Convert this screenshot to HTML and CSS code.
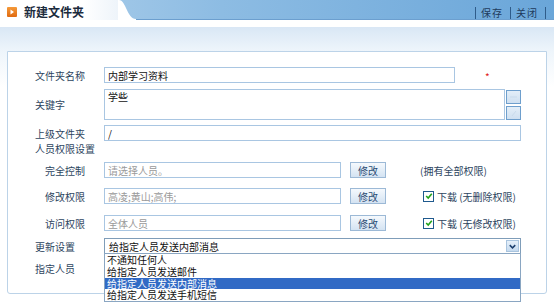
FILE: index.html
```html
<!DOCTYPE html>
<html lang="zh-CN">
<head>
    <meta charset="UTF-8">
    <meta name="viewport" content="width=device-width, initial-scale=1.0">
    <title>新建文件夹</title>
    <link rel="stylesheet" href="styles.css">
</head>
<body>

<div class="topbar">
    <div class="tab">
        <span class="tab-icon">
            <svg width="10" height="10" viewBox="0 0 10 10"><path d="M3.5 2.5 L7 5 L3.5 7.5 Z" fill="#fff"/></svg>
        </span>
        新建文件夹
    </div>
    <svg class="tab-curve" width="20" height="20" viewBox="0 0 20 20">
        <path d="M0 0 L1 0 C8 0, 9 19, 18 19 L18 20 L0 20 Z" fill="#fff"/>
    </svg>
    <div class="actions">
        <span class="action">保存</span>
        <span class="action">关闭</span>
    </div>
</div>
<div class="band"></div>

<div class="main">
    <div class="panel">
        <div class="row">
            <span class="label">文件夹名称</span>
            <input class="field field-name" type="text" value="内部学习资料">
            <span class="required">*</span>
        </div>
        <div class="row row-keys">
            <span class="label">关键字</span>
            <textarea class="field field-keys">学些</textarea>
            <div class="side-btns">
                <span class="side-btn"><svg width="13" height="12" viewBox="0 0 13 12"><path d="M3 6 H10" stroke="#c9dbec" stroke-width="1"/></svg></span>
                <span class="side-btn"><svg width="13" height="12" viewBox="0 0 13 12"><path d="M5 9 L9 4" stroke="#c9dbec" stroke-width="1"/></svg></span>
            </div>
        </div>
        <div class="row row-parent">
            <span class="label">上级文件夹</span>
            <input class="field field-wide" type="text" value="/">
        </div>
        <div class="row row-title">
            <span class="label">人员权限设置</span>
        </div>
        <div class="row row-perm">
            <span class="label sub">完全控制</span>
            <input class="field field-perm muted" type="text" value="请选择人员。">
            <button class="btn">修改</button>
            <span class="note">(拥有全部权限)</span>
        </div>
        <div class="row row-perm2">
            <span class="label sub">修改权限</span>
            <input class="field field-perm muted" type="text" value="高凌;黄山;高伟;">
            <button class="btn">修改</button>
            <span class="check"><svg width="8" height="8" viewBox="0 0 8 8"><path d="M1.2 4 L3.2 6 L6.8 1.8" fill="none" stroke="#21a21a" stroke-width="1.6"/></svg></span>
            <span class="check-text">下载 (无删除权限)</span>
        </div>
        <div class="row row-perm3">
            <span class="label sub">访问权限</span>
            <input class="field field-perm muted" type="text" value="全体人员">
            <button class="btn">修改</button>
            <span class="check"><svg width="8" height="8" viewBox="0 0 8 8"><path d="M1.2 4 L3.2 6 L6.8 1.8" fill="none" stroke="#21a21a" stroke-width="1.6"/></svg></span>
            <span class="check-text">下载 (无修改权限)</span>
        </div>
        <div class="row row-update">
            <span class="label">更新设置</span>
            <div class="select">
                <span class="select-value">给指定人员发送内部消息</span>
                <span class="select-arrow">
                    <svg width="12" height="11" viewBox="0 0 12 11"><path d="M3 4 L6 7 L9 4" fill="none" stroke="#1d3f6e" stroke-width="1.6"/></svg>
                </span>
                <ul class="options">
                    <li>不通知任何人</li>
                    <li>给指定人员发送邮件</li>
                    <li class="selected">给指定人员发送内部消息</li>
                    <li>给指定人员发送手机短信</li>
                </ul>
            </div>
        </div>
        <div class="row row-title row-people">
            <span class="label">指定人员</span>
        </div>
    </div>
</div>

</body>
</html>
```

FILE: styles.css
```css
body {
    margin: 0;
    font-family: "Noto Sans CJK SC", "Noto Sans", sans-serif;
    font-size: 10px;
    color: #2d4560;
    background: #fff;
}
.topbar {
    display: flex;
    height: 20px;
    background: linear-gradient(to right, #b2d2ec, #8dbce3 40%, #6aa6d9);
    box-shadow: inset 0 -1px 0 #6c9fcf;
}
.tab {
    width: 118px;
    box-sizing: border-box;
    display: flex;
    align-items: center;
    gap: 7px;
    padding: 3px 0 0 7px;
    background: linear-gradient(to right, #fff 70%, #eef4fa);
    font-size: 12px;
    font-weight: bold;
    color: #1b2b3d;
}
.tab-icon {
    display: flex;
    width: 10px;
    height: 10px;
    border-radius: 1px;
    background: linear-gradient(#f59a3a, #e06a10);
}
.tab-curve {
    display: block;
    flex: none;
}
.actions {
    margin-left: auto;
    margin-right: 8px;
    display: flex;
    align-items: flex-end;
    border-right: 1px solid #2f5c8a;
    height: 12px;
    align-self: flex-end;
    margin-bottom: 1px;
}
.action {
    border-left: 1px solid #2f5c8a;
    padding: 0 7px 0 5px;
    letter-spacing: 1px;
    line-height: 12px;
    color: #1e3a5c;
}
.band {
    height: 7px;
}
.main {
    padding: 24px 7px 12px 7px;
    background: linear-gradient(#d9e7f5, #eef5fb 24px, #fff 60px);
}
.panel {
    box-sizing: border-box;
    height: 243px;
    border: 1px solid #bcd3e8;
    border-radius: 0 0 3px 3px;
    background: #fff;
    padding: 15px 0 0 27px;
}
.row {
    display: flex;
    align-items: center;
    height: 16px;
}
.label {
    width: 69px;
    flex: none;
}
.label.sub {
    padding-left: 10px;
    box-sizing: border-box;
}
.field {
    box-sizing: border-box;
    height: 16px;
    border: 1px solid #a9c6e2;
    padding: 0 3px;
    font-family: inherit;
    font-size: 10px;
    line-height: 14px;
    color: #111;
    background: #fff;
    outline: none;
    margin: 0;
}
.field.muted {
    color: #9a9a9a;
}
.field-name {
    width: 351px;
}
.required {
    margin-left: 30px;
    margin-top: 2px;
    color: #e02020;
    font-size: 10px;
}
.row-keys {
    height: 31px;
    margin-top: 6px;
}
.field-keys {
    width: 401px;
    height: 31px;
    resize: none;
    padding: 0 3px;
    overflow: hidden;
}
.side-btns {
    display: flex;
    flex-direction: column;
    gap: 2px;
    margin-left: 1px;
}
.side-btn {
    display: flex;
    width: 15px;
    height: 14px;
    box-sizing: border-box;
    border: 1px solid #6e9fcd;
    background: linear-gradient(#e3eef8, #cfe0f1);
}
.row-parent {
    margin-top: 5px;
}
.field-wide {
    width: 417px;
}
.row-title {
    height: 14px;
}
.row-perm {
    margin-top: 7px;
}
.row-perm2 {
    margin-top: 10px;
}
.row-perm3 {
    margin-top: 11px;
}
.field-perm {
    width: 237px;
}
.btn {
    box-sizing: border-box;
    width: 36px;
    height: 16px;
    margin-left: 9px;
    padding: 0;
    border: 1px solid #9cb9d6;
    background: linear-gradient(#f5f9fd, #d4e3f2);
    font-family: inherit;
    font-size: 10px;
    color: #2a4b74;
}
.note {
    margin-left: 34px;
}
.check {
    display: flex;
    align-items: center;
    justify-content: center;
    box-sizing: border-box;
    width: 11px;
    height: 11px;
    margin-left: 37px;
    border: 1px solid #1f5a8e;
    background: #fff;
}
.check-text {
    margin-left: 3px;
}
.row-update {
    margin-top: 7px;
}
.select {
    position: relative;
    box-sizing: border-box;
    width: 417px;
    height: 16px;
    border: 1px solid #7f9db9;
    display: flex;
    align-items: center;
    background: #fff;
}
.select-value {
    padding-left: 4px;
    color: #111;
}
.select-arrow {
    margin-left: auto;
    margin-right: 1px;
    display: flex;
    box-sizing: border-box;
    width: 13px;
    height: 12px;
    border: 1px solid #a9c4de;
    background: linear-gradient(#e6f0fa, #c5daef);
}
.options {
    position: absolute;
    top: 14px;
    left: -1px;
    right: -1px;
    margin: 0;
    padding: 0;
    list-style: none;
    border: 1px solid #8aa6c2;
    background: #fff;
    font-size: 10px;
    color: #111;
}
.options li {
    height: 11.75px;
    line-height: 11.75px;
    padding-left: 2px;
}
.options .selected {
    background: #316ac5;
    color: #fff;
}
.row-people {
    margin-top: 7px;
}
```
